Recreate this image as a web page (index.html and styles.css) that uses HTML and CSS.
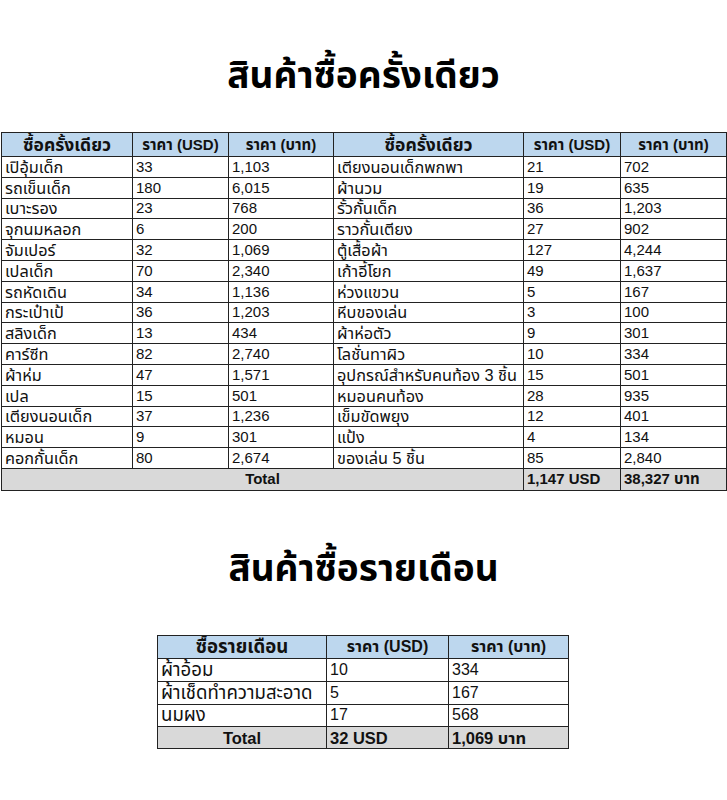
FILE: index.html
```html
<!DOCTYPE html>
<html lang="th">
<head>
<meta charset="utf-8">
<link rel="stylesheet" href="styles.css">
</head>
<body>
<h1 class="title title-1">สินค้าซื้อครั้งเดียว</h1>
<table class="sheet sheet-1">
<colgroup>
<col class="c1"><col class="c2"><col class="c3"><col class="c4"><col class="c5"><col class="c6">
</colgroup>
<thead>
<tr><th class="name">ซื้อครั้งเดียว</th><th>ราคา (USD)</th><th>ราคา (บาท)</th><th class="name">ซื้อครั้งเดียว</th><th>ราคา (USD)</th><th>ราคา (บาท)</th></tr>
</thead>
<tbody>
<tr><td>เปิอุ้มเด็ก</td><td>33</td><td>1,103</td><td>เตียงนอนเด็กพกพา</td><td>21</td><td>702</td></tr>
<tr><td>รถเข็นเด็ก</td><td>180</td><td>6,015</td><td>ผ้านวม</td><td>19</td><td>635</td></tr>
<tr><td>เบาะรอง</td><td>23</td><td>768</td><td>รั้วกั้นเด็ก</td><td>36</td><td>1,203</td></tr>
<tr><td>จุกนมหลอก</td><td>6</td><td>200</td><td>ราวกั้นเตียง</td><td>27</td><td>902</td></tr>
<tr><td>จัมเปอร์</td><td>32</td><td>1,069</td><td>ตู้เสื้อผ้า</td><td>127</td><td>4,244</td></tr>
<tr><td>เปลเด็ก</td><td>70</td><td>2,340</td><td>เก้าอี้โยก</td><td>49</td><td>1,637</td></tr>
<tr><td>รถหัดเดิน</td><td>34</td><td>1,136</td><td>ห่วงแขวน</td><td>5</td><td>167</td></tr>
<tr><td>กระเป๋าเป้</td><td>36</td><td>1,203</td><td>หีบของเล่น</td><td>3</td><td>100</td></tr>
<tr><td>สลิงเด็ก</td><td>13</td><td>434</td><td>ผ้าห่อตัว</td><td>9</td><td>301</td></tr>
<tr><td>คาร์ซีท</td><td>82</td><td>2,740</td><td>โลชั่นทาผิว</td><td>10</td><td>334</td></tr>
<tr><td>ผ้าห่ม</td><td>47</td><td>1,571</td><td>อุปกรณ์สำหรับคนท้อง 3 ชิ้น</td><td>15</td><td>501</td></tr>
<tr><td>เปล</td><td>15</td><td>501</td><td>หมอนคนท้อง</td><td>28</td><td>935</td></tr>
<tr><td>เตียงนอนเด็ก</td><td>37</td><td>1,236</td><td>เข็มขัดพยุง</td><td>12</td><td>401</td></tr>
<tr><td>หมอน</td><td>9</td><td>301</td><td>แป้ง</td><td>4</td><td>134</td></tr>
<tr><td>คอกกั้นเด็ก</td><td>80</td><td>2,674</td><td>ของเล่น 5 ชิ้น</td><td>85</td><td>2,840</td></tr>
</tbody>
<tfoot>
<tr><td colspan="4" class="total-label">Total</td><td class="total-val">1,147 USD</td><td class="total-val">38,327 บาท</td></tr>
</tfoot>
</table>

<h1 class="title title-2">สินค้าซื้อรายเดือน</h1>
<table class="sheet sheet-2">
<colgroup>
<col class="d1"><col class="d2"><col class="d3">
</colgroup>
<thead>
<tr><th class="name">ซื้อรายเดือน</th><th>ราคา (USD)</th><th>ราคา (บาท)</th></tr>
</thead>
<tbody>
<tr><td>ผ้าอ้อม</td><td>10</td><td>334</td></tr>
<tr><td>ผ้าเช็ดทำความสะอาด</td><td>5</td><td>167</td></tr>
<tr><td>นมผง</td><td>17</td><td>568</td></tr>
</tbody>
<tfoot>
<tr><td class="total-label">Total</td><td class="total-val">32 USD</td><td class="total-val">1,069 บาท</td></tr>
</tfoot>
</table>
</body>
</html>
```
FILE: styles.css
```css
html, body {
  margin: 0;
  padding: 0;
  background: #ffffff;
}
body {
  font-family: "Liberation Sans", "Noto Sans Thai", "Noto Sans", sans-serif;
  color: #111111;
}
.title {
  margin: 0;
  text-align: center;
  font-family: "Noto Sans Thai", "Noto Sans", sans-serif;
  font-weight: 700;
  font-size: 37px;
  line-height: 50px;
  color: #000000;
}
.title-1 {
  padding-top: 52px;
}
.title-2 {
  padding-top: 54px;
}
.sheet {
  border-collapse: collapse;
  table-layout: fixed;
}
.sheet th, .sheet td {
  border: 1px solid #222222;
  padding: 0 3px;
  white-space: nowrap;
  overflow: hidden;
  text-align: left;
}
.sheet th {
  background: #bdd7ee;
  font-weight: 700;
  text-align: center;
}
.sheet tfoot td {
  background: #d9d9d9;
  font-weight: 700;
}
.sheet .total-label {
  text-align: center;
}
.sheet-1 {
  margin-top: 30px;
  margin-left: 1px;
  width: 725px;
  font-size: 15px;
}
.sheet-1 th { height: 23px; line-height: 20px; }
.sheet-1 td { height: 19.8px; line-height: 18px; }
.sheet-1 tfoot td { height: 21px; }
.sheet-1 tbody td:nth-child(1),
.sheet-1 tbody td:nth-child(4) { font-size: 16.3px; }
.sheet-1 th.name { font-size: 17.5px; }
.c1 { width: 131px; }
.c2 { width: 96px; }
.c3 { width: 105px; }
.c4 { width: 190px; }
.c5 { width: 97px; }
.c6 { width: 106px; }

.sheet-2 {
  margin: 40px auto 0 157px;
  width: 411px;
  font-size: 16px;
}
.sheet-2 th { height: 22px; line-height: 20px; }
.sheet-2 td { height: 21.8px; line-height: 18px; }
.sheet-2 tfoot td { font-size: 16.5px; height: 21px; }
.sheet-2 tbody td:nth-child(1) { font-size: 18.6px; }
.sheet-2 th.name { font-size: 18.6px; }
.d1 { width: 169px; }
.d2 { width: 122px; }
.d3 { width: 120px; }
```
